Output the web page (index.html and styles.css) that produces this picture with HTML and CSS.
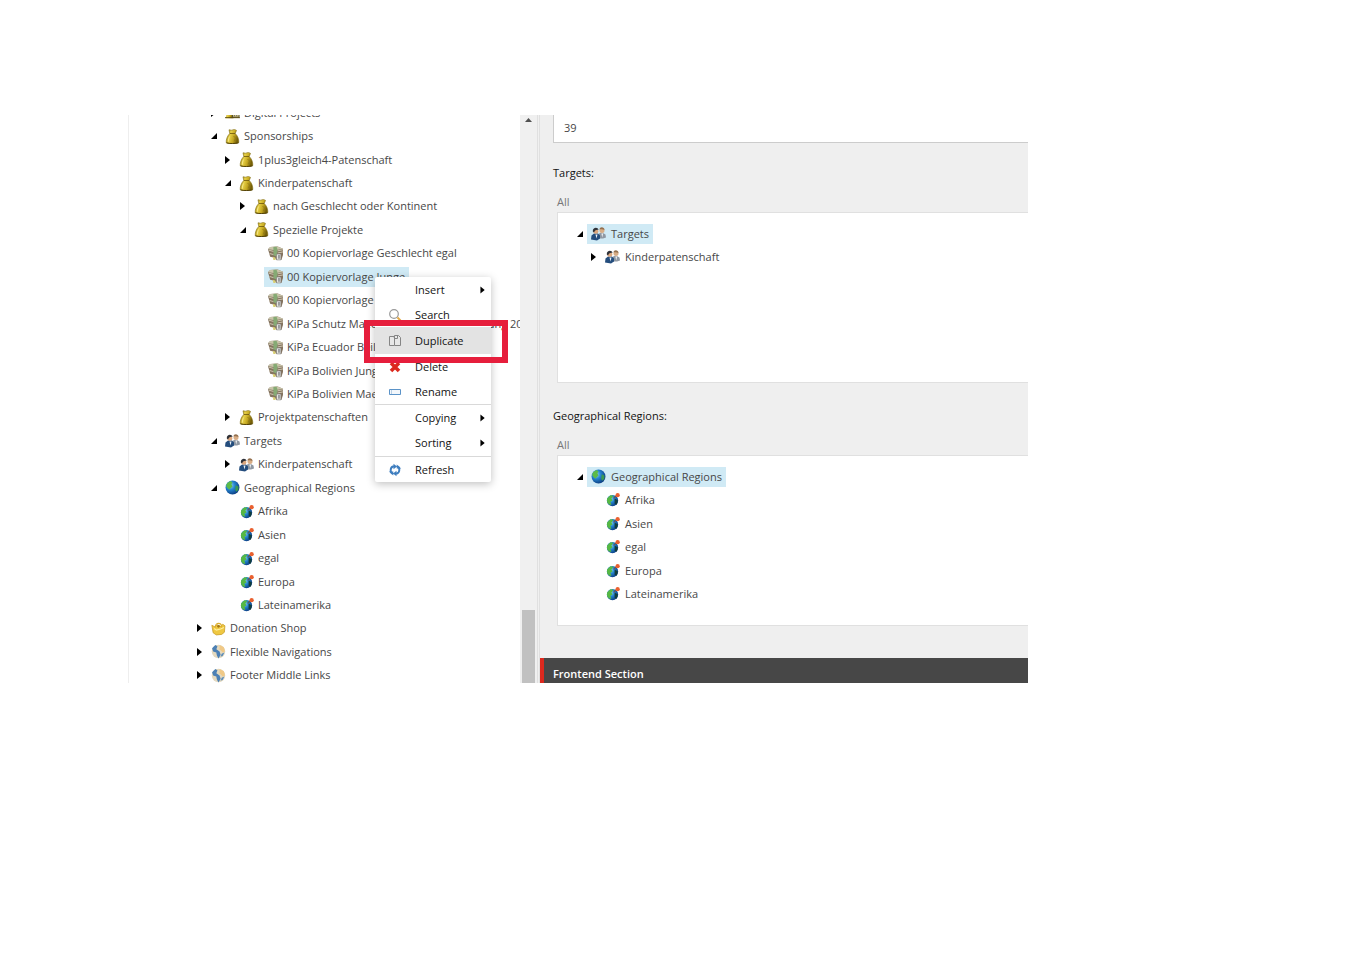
FILE: index.html
```html
<!DOCTYPE html>
<html lang="en">
<head>
<meta charset="utf-8">
<title>Content Editor</title>
<link rel="stylesheet" href="styles.css">
</head>
<body>
<svg class="defs" aria-hidden="true">
  <defs>
    <linearGradient id="gold" x1="0" x2="1" y1="0" y2="0.3"><stop offset="0" stop-color="#8f7a10"/><stop offset=".4" stop-color="#e6cf45"/><stop offset=".7" stop-color="#c3a620"/><stop offset="1" stop-color="#766008"/></linearGradient>
    <radialGradient id="sea" cx=".35" cy=".35" r=".7"><stop offset="0" stop-color="#8fd4f5"/><stop offset=".45" stop-color="#2483cf"/><stop offset="1" stop-color="#0b3c80"/></radialGradient>
  </defs>
  <symbol id="right" viewBox="0 0 14 14"><path d="M4 3l5 4-5 4z"/></symbol>
  <symbol id="down" viewBox="0 0 14 14"><path d="M10 4v6H4z"/></symbol>
  <symbol id="bag" viewBox="0 0 14 15">
    <path d="M3.500.8l2.500.4L9 .4l2 1L9.700 4.500c2.300 2 3.800 5.500 3.600 9-1.800 1.500-10.800 1.600-12.600.2C.5 10.500 2 6.500 4.300 4.500z" fill="url(#gold)" stroke="#80690f" stroke-width=".6"/>
    <path d="M4.300 4.500h5.400" stroke="#6b550a" stroke-width=".8"/><path d="M4 7.500c-1 2-1 3-1 5" stroke="#f6e88a" fill="none"/><path d="M8 7l2 2-1 3" stroke="#8d7413" fill="none" stroke-width=".7"/><path d="M1 13.800c3 1 9 1 12 0" stroke="#54430a" fill="none"/>
  </symbol>
  <symbol id="money" viewBox="0 0 14 14">
    <path d="M0 3l2-2 7-.5 5 2v6L12.500 13H8l-2-2-4-1z" fill="#85745f"/><path d="M0 3l2-2 7-.5 5 2L7 4z" fill="#c9c5aa"/><path d="M5 1l3-.3 1 3-1 6-3-1V4z" fill="#86aa74"/><path d="M1 4l4 1M1.500 7L5 8M9 4.500l5-1M9 6.500l5-1" stroke="#d9d2bd" fill="none" stroke-width=".8"/><path d="M8 7.500h4V13H8z" fill="#e9e9e5" stroke="#777" stroke-width=".5"/><path d="M9.500 8.500h1.500V12H9.500z" fill="#8b8d90"/><path d="M4.500 10l2.500 1v2H5z" fill="#d9cf73"/>
  </symbol>
  <symbol id="people" viewBox="0 0 15 14">
    <path d="M7 12l1-5 3-1 3.500 2 .5 3-3 1z" fill="#8f98a3"/><circle cx="11" cy="4" r="2.500" fill="#d8ad86"/><path d="M8.500 3c0-3 5-3 5 .5C12 2.500 10 2.500 8.500 3z" fill="#94704e"/><path d="M10.500 7l.7 4 .8-4z" fill="#fff"/>
    <path d="M0 13l.5-4L3 7h4l2 2v3l-3 2z" fill="#244d7d"/><circle cx="4.800" cy="4.800" r="2.500" fill="#dca77e"/><path d="M1.800 5c-.5-4 5-5 5.800-1.500C6 3 4 3.500 3 6z" fill="#303238"/><path d="M4.500 8l1 4 1-4z" fill="#ecf4fa"/>
  </symbol>
  <symbol id="globe" viewBox="0 0 14 14">
    <circle cx="7" cy="7" r="6.500" fill="url(#sea)"/><path d="M2 3l3-2 2 1-1 2 1 2-2 2-1 1-2-2C1 7 1 4.500 2 3z" fill="#5cbb48"/><path d="M10 5l2.500 1v3l-2 2-1-2z" fill="#3a9a51"/>
  </symbol>
  <symbol id="region" viewBox="-1 0 14 14">
    <circle cx="6" cy="8" r="5.300" fill="url(#sea)"/><path d="M1 6l3-3 3 .5L5 6l1 2-2 1 1 3C1 11.500.5 9 1 6z" fill="#56b844"/><path d="M8 6l3 2-1 4-2-1z" fill="#113d3c"/><path d="M7 6l4-4" stroke="#71554c"/><circle cx="10.800" cy="3" r="2" fill="#e9602f"/>
  </symbol>
  <symbol id="basket" viewBox="0 0 14 14">
    <path d="M.8 4l3 1.500 2-2L9 5l2-2 2 1.500-.5 6-2.500 2-5 .5-3-2z" fill="#efc842" stroke="#c79b24" stroke-width=".7"/><path d="M4 6c0-5 6-5 6 0" fill="none" stroke="#dcae2d" stroke-width="1.200"/><path d="M3 7l2 1.500 4-1L12 6" stroke="#fff0a0" fill="none"/><circle cx="7" cy="5" r="1.200" fill="#a17515"/>
  </symbol>
  <symbol id="world" viewBox="0 0 14 14">
    <circle cx="7" cy="7" r="6.300" fill="#e4d9bf"/><path d="M1 4l3-3 2 1-1 3 3 2 1 3-2 3.500C6 12 5 10 5 8L2 7z" fill="#4c80b5"/><path d="M8 1l4 2 1 4-2 1-3-3z" fill="#f0c987"/><path d="M10 9l2.500-1-1.500 3-2 1z" fill="#5589bb"/>
  </symbol>
  <symbol id="projects" viewBox="0 0 16 14">
    <path d="M1 13L2 7l4-3 3 3v6z" fill="url(#gold)"/><path d="M8 7h7v5H8z" fill="#d7c886" stroke="#4d4c35"/><path d="M10 8v3M12.500 8v3" stroke="#60616a"/><path d="M0 12.500h16" stroke="#58470d"/>
  </symbol>
</svg>

<main class="editor">
  <nav class="content-tree" aria-label="Content tree">
    <ul class="tree">
      <li class="row level-1"><button class="toggle" aria-label="Expand"><svg><use href="#right"/></svg></button><a class="node" href="#"><svg class="icon"><use href="#projects"/></svg>Digital Projects</a></li>
      <li class="row level-1"><button class="toggle" aria-label="Collapse"><svg><use href="#down"/></svg></button><a class="node" href="#"><svg class="icon"><use href="#bag"/></svg>Sponsorships</a></li>
      <li class="row level-2"><button class="toggle" aria-label="Expand"><svg><use href="#right"/></svg></button><a class="node" href="#"><svg class="icon"><use href="#bag"/></svg>1plus3gleich4-Patenschaft</a></li>
      <li class="row level-2"><button class="toggle" aria-label="Collapse"><svg><use href="#down"/></svg></button><a class="node" href="#"><svg class="icon"><use href="#bag"/></svg>Kinderpatenschaft</a></li>
      <li class="row level-3"><button class="toggle" aria-label="Expand"><svg><use href="#right"/></svg></button><a class="node" href="#"><svg class="icon"><use href="#bag"/></svg>nach Geschlecht oder Kontinent</a></li>
      <li class="row level-3"><button class="toggle" aria-label="Collapse"><svg><use href="#down"/></svg></button><a class="node" href="#"><svg class="icon"><use href="#bag"/></svg>Spezielle Projekte</a></li>
      <li class="row level-4 leaf"><a class="node" href="#"><svg class="icon"><use href="#money"/></svg>00 Kopiervorlage Geschlecht egal</a></li>
      <li class="row level-4 leaf"><a class="node selected" href="#"><svg class="icon"><use href="#money"/></svg>00 Kopiervorlage Junge</a></li>
      <li class="row level-4 leaf"><a class="node" href="#"><svg class="icon"><use href="#money"/></svg>00 Kopiervorlage Maedchen</a></li>
      <li class="row level-4 leaf"><a class="node" href="#"><svg class="icon"><use href="#money"/></svg>KiPa Schutz Maedchen ohne Beschneidung 20</a></li>
      <li class="row level-4 leaf"><a class="node" href="#"><svg class="icon"><use href="#money"/></svg>KiPa Ecuador Beilage</a></li>
      <li class="row level-4 leaf"><a class="node" href="#"><svg class="icon"><use href="#money"/></svg>KiPa Bolivien Junge</a></li>
      <li class="row level-4 leaf"><a class="node" href="#"><svg class="icon"><use href="#money"/></svg>KiPa Bolivien Maedchen</a></li>
      <li class="row level-2"><button class="toggle" aria-label="Expand"><svg><use href="#right"/></svg></button><a class="node" href="#"><svg class="icon"><use href="#bag"/></svg>Projektpatenschaften</a></li>
      <li class="row level-1"><button class="toggle" aria-label="Collapse"><svg><use href="#down"/></svg></button><a class="node" href="#"><svg class="icon"><use href="#people"/></svg>Targets</a></li>
      <li class="row level-2"><button class="toggle" aria-label="Expand"><svg><use href="#right"/></svg></button><a class="node" href="#"><svg class="icon"><use href="#people"/></svg>Kinderpatenschaft</a></li>
      <li class="row level-1"><button class="toggle" aria-label="Collapse"><svg><use href="#down"/></svg></button><a class="node" href="#"><svg class="icon"><use href="#globe"/></svg>Geographical Regions</a></li>
      <li class="row level-2 leaf"><a class="node" href="#"><svg class="icon"><use href="#region"/></svg>Afrika</a></li>
      <li class="row level-2 leaf"><a class="node" href="#"><svg class="icon"><use href="#region"/></svg>Asien</a></li>
      <li class="row level-2 leaf"><a class="node" href="#"><svg class="icon"><use href="#region"/></svg>egal</a></li>
      <li class="row level-2 leaf"><a class="node" href="#"><svg class="icon"><use href="#region"/></svg>Europa</a></li>
      <li class="row level-2 leaf"><a class="node" href="#"><svg class="icon"><use href="#region"/></svg>Lateinamerika</a></li>
      <li class="row"><button class="toggle" aria-label="Expand"><svg><use href="#right"/></svg></button><a class="node" href="#"><svg class="icon"><use href="#basket"/></svg>Donation Shop</a></li>
      <li class="row"><button class="toggle" aria-label="Expand"><svg><use href="#right"/></svg></button><a class="node" href="#"><svg class="icon"><use href="#world"/></svg>Flexible Navigations</a></li>
      <li class="row"><button class="toggle" aria-label="Expand"><svg><use href="#right"/></svg></button><a class="node" href="#"><svg class="icon"><use href="#world"/></svg>Footer Middle Links</a></li>
    </ul>
  </nav>

  <div class="scrollbar" aria-hidden="true">
    <svg class="scroll-up" viewBox="0 0 7 4"><path d="M3.500 0L7 4H0z"/></svg>
    <div class="thumb"></div>
  </div>
  <div class="splitter"></div>

  <section class="fields">
    <input class="text-field" type="text" value="39" aria-label="Value">
    <h2 class="field-label">Targets:</h2>
    <a class="all" href="#">All</a>
    <ul class="picker">
      <li class="row"><button class="toggle" aria-label="Collapse"><svg><use href="#down"/></svg></button><a class="node selected" href="#"><svg class="icon"><use href="#people"/></svg>Targets</a></li>
      <li class="row level-1"><button class="toggle" aria-label="Expand"><svg><use href="#right"/></svg></button><a class="node" href="#"><svg class="icon"><use href="#people"/></svg>Kinderpatenschaft</a></li>
    </ul>
    <h2 class="field-label">Geographical Regions:</h2>
    <a class="all" href="#">All</a>
    <ul class="picker">
      <li class="row"><button class="toggle" aria-label="Collapse"><svg><use href="#down"/></svg></button><a class="node selected" href="#"><svg class="icon"><use href="#globe"/></svg>Geographical Regions</a></li>
      <li class="row level-1 leaf"><a class="node" href="#"><svg class="icon"><use href="#region"/></svg>Afrika</a></li>
      <li class="row level-1 leaf"><a class="node" href="#"><svg class="icon"><use href="#region"/></svg>Asien</a></li>
      <li class="row level-1 leaf"><a class="node" href="#"><svg class="icon"><use href="#region"/></svg>egal</a></li>
      <li class="row level-1 leaf"><a class="node" href="#"><svg class="icon"><use href="#region"/></svg>Europa</a></li>
      <li class="row level-1 leaf"><a class="node" href="#"><svg class="icon"><use href="#region"/></svg>Lateinamerika</a></li>
    </ul>
    <h2 class="section-bar">Frontend Section</h2>
  </section>

  <div class="menu" role="menu">
    <button class="item" role="menuitem"><span class="slot"></span>Insert<svg class="more"><use href="#right"/></svg></button>
    <button class="item" role="menuitem"><svg class="slot" viewBox="0 0 14 14"><circle cx="6" cy="6" r="4.300" fill="#fff" stroke="#999" stroke-width="1.200"/><path d="M9.500 9.500l3 3" stroke="#e5a944" stroke-width="2"/></svg>Search</button>
    <button class="item active" role="menuitem"><svg class="slot" viewBox="0 0 14 14" fill="#e8e8e8" stroke="#858585"><path d="M6 3.500V2.500H1.500v9h5"/><path d="M6.500 1.500h4l2 2v8h-6z"/><path d="M6.500 4.500h3v-3" fill="none"/></svg>Duplicate</button>
    <button class="item" role="menuitem"><svg class="slot" viewBox="0 0 14 14"><path d="M3 3l8 8M11 3l-8 8" stroke="#dc291e" stroke-width="3.600"/></svg>Delete</button>
    <button class="item" role="menuitem"><svg class="slot" viewBox="0 0 14 14"><path d="M1.500 4.500h11v5h-11z" fill="#f3f7fb" stroke="#5b93c8"/><path d="M3.500 5v4" stroke="#b9cfe4"/></svg>Rename</button>
    <hr class="line">
    <button class="item" role="menuitem"><span class="slot"></span>Copying<svg class="more"><use href="#right"/></svg></button>
    <button class="item last" role="menuitem"><span class="slot"></span>Sorting<svg class="more"><use href="#right"/></svg></button>
    <hr class="line">
    <button class="item" role="menuitem"><svg class="slot" viewBox="0 0 14 14" fill="none" stroke="#3f7ebf" stroke-width="1.900"><path d="M4.500 10.500C2 9.500 2 4.500 5 3.500h1.500"/><path d="M9.500 3.500c2.500 1 2.500 6-.5 7H7.500"/><path d="M5.500.8v5.400l3.500-2.700zM8.500 7.800v5.400L5 10.500zM.8 8.500h4.500v4zM13.200 5.500H8.700v-4z" fill="#3f7ebf" stroke="none"/></svg>Refresh</button>
  </div>
  <div class="highlight-frame"></div>
</main>
</body>
</html>
```

FILE: styles.css
```css
* {
  box-sizing: border-box;
}

body {
  height: 100vh;
  margin: 0;
  padding: 115px 341px 285px 128px;
  background: #fff;
  color: #474747;
  font: 11px/20px "Open Sans", sans-serif;
}

button,
input {
  font: inherit;
  color: inherit;
}

ul {
  margin: 0;
  padding: 0;
  list-style: none;
}

.defs {
  position: absolute;
  width: 0;
  height: 0;
}

.editor {
  position: relative;
  display: flex;
  height: 100%;
}

.content-tree {
  flex: 0 0 392px;
  overflow: hidden;
  border-left: 1px solid #eee;
}

.tree {
  display: grid;
  grid-auto-rows: 1fr;
  height: calc(100% + 18px);
  margin-top: -14px;
  padding-left: 64px;
}

.row {
  display: flex;
  align-items: center;
  white-space: nowrap;
}

.level-1 { padding-left: 14px; }
.level-2 { padding-left: 28px; }
.level-3 { padding-left: 43px; }
.level-4 { padding-left: 57px; }

.toggle {
  flex: none;
  width: 14px;
  height: 14px;
  padding: 0;
  border: 0;
  background: none;
}

.toggle svg {
  display: block;
  width: 14px;
  height: 14px;
  fill: #000;
}

.leaf .node {
  margin-left: 14px;
}

.node {
  display: flex;
  align-items: center;
  gap: 5px;
  height: 20px;
  padding: 0 4px;
  color: #474747;
  text-decoration: none;
}

.selected {
  background: #d0eaf5;
}

.icon {
  flex: none;
  width: 15px;
  height: 15px;
  margin-right: -1px;
}

.scrollbar {
  display: flex;
  flex: 0 0 17px;
  flex-direction: column;
  align-items: center;
  justify-content: space-between;
  padding-top: 3px;
  background: #f0f0f0;
}

.scroll-up {
  width: 7px;
  height: 4px;
  fill: #505050;
}

.thumb {
  width: 13px;
  height: 13%;
  background: #c1c1c1;
}

.splitter {
  flex: 0 0 3px;
  border: solid #e0e0e0;
  border-width: 0 1px;
  background: #f0f0f0;
}

.fields {
  display: flex;
  flex: 1;
  flex-direction: column;
  min-width: 0;
  overflow: hidden;
  background: #efefef;
}

.text-field {
  flex: none;
  height: 28px;
  margin-left: 13px;
  padding: 0 10px 2px;
  border: solid #ccc;
  border-width: 0 0 1px 1px;
  border-radius: 0;
  background: #fff;
}

.field-label {
  margin: 20px 13px 0;
  color: #131313;
  font: inherit;
}

.all {
  margin: 9px 17px 0;
  color: #777;
  text-decoration: none;
}

.picker {
  flex: 0 0 171px;
  margin-left: 17px;
  padding: 9px 0 0 15px;
  border: solid #e0e0e0;
  border-width: 1px 0 1px 1px;
  background: #fff;
}

.picker + .field-label {
  margin-top: 23px;
}

.picker .row {
  height: 23px;
}

.picker .row:nth-child(even) {
  margin-bottom: 1px;
}

.picker .node {
  gap: 6px;
}

.section-bar {
  flex: 1;
  margin: 32px 0 0;
  padding: 6px 9px 0;
  border-left: 4px solid #dc291e;
  background: #474747;
  color: #fff;
  font-size: 11px;
  font-weight: 600;
  line-height: 20px;
}

/* Context menu, opened over the tree */
.menu {
  position: absolute;
  top: 162px;
  left: 247px;
  width: 116px;
  background: #fff;
  border-radius: 2px;
  box-shadow: 0 2px 8px rgba(0, 0, 0, 0.25);
}

.item {
  display: flex;
  align-items: center;
  width: 100%;
  height: 25px;
  padding: 0 2px 0 13px;
  border: 0;
  background: none;
  color: #131313;
}

.item.active {
  height: 27px;
  background: #e3e3e3;
}

.item.last {
  height: 26px;
}

.slot {
  width: 14px;
  height: 14px;
  margin-right: 13px;
}

.more {
  width: 12px;
  height: 12px;
  margin-left: auto;
}

.line {
  margin: 0;
  border: 0;
  border-top: 1px solid #d9d9d9;
}

.highlight-frame {
  position: absolute;
  top: 205px;
  left: 236px;
  width: 144px;
  height: 43px;
  border: 6px solid #e61e3c;
  pointer-events: none;
}
```
